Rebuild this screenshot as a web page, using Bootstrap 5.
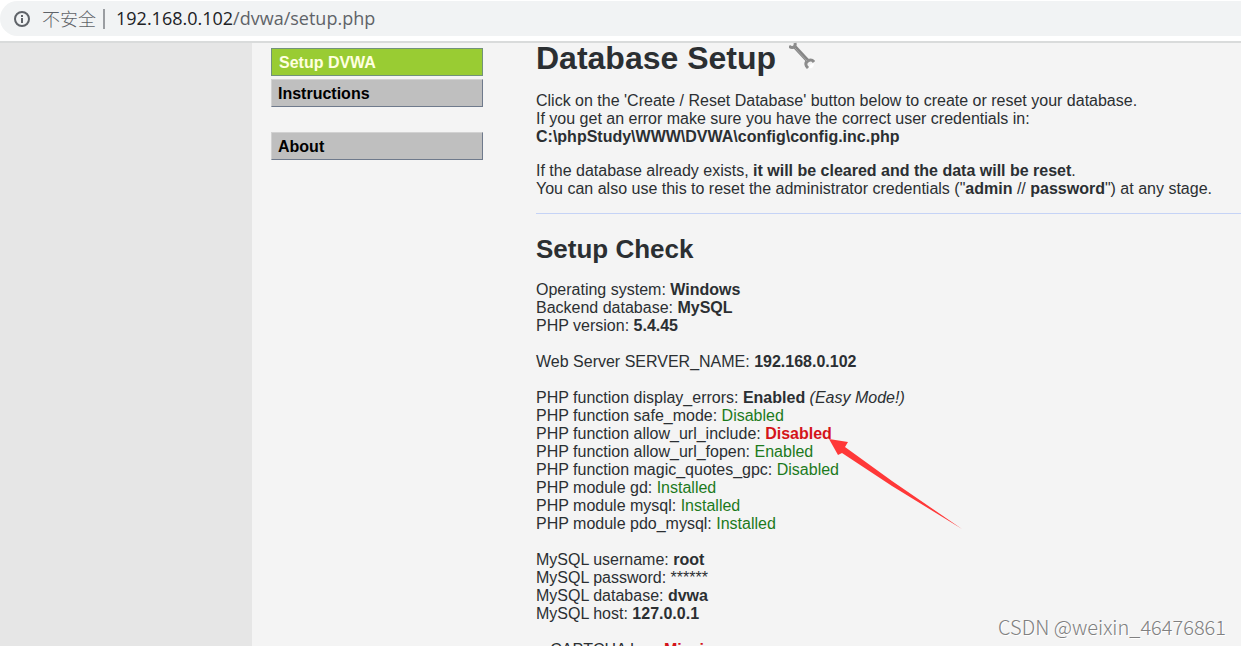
<!DOCTYPE html>
<html lang="en">
<head>
<meta charset="utf-8">
<meta name="viewport" content="width=device-width, initial-scale=1">
<title>Setup :: Damn Vulnerable Web Application</title>
<link href="https://cdn.jsdelivr.net/npm/bootstrap@5.3.0/dist/css/bootstrap.min.css" rel="stylesheet">
<style>
  body { font: 16px/18px "Liberation Sans", Arial, sans-serif; color: #2b2f32; background: #f4f4f4; }
  .omnibar { background: #fff; border-bottom: 2px solid #d9dbdb; padding: 1px 0 5px; }
  .omnibox { height: 35px; background: #f1f3f4; border-radius: 18px 0 0 18px; padding-left: 13px; color: #5f6368; font: 18px/35px "Open Sans", "Noto Sans CJK SC", sans-serif; }
  .insecure { font-family: "Noto Sans CJK SC", sans-serif; font-weight: 300; margin-left: 11px; }
  .omni-rule { width: 2px; height: 20px; background: #9a9da1; margin: 0 11px 0 7px; }
  .host { color: #202124; }
  .gutter { flex: 0 0 252px; background: #e6e6e6; }
  .side { flex: 0 0 284px; padding: 5px 53px 0 19px; }
  .menu-item { display: block; height: 28px; margin-bottom: 3px; padding: 0 6px; line-height: 28px; font-weight: bold; color: #000; text-decoration: none; background: #bfbfbf; border: 1px solid; border-color: #d2d2d2 #6f7a8c #6f7a8c #d2d2d2; }
  .menu-item.active { background: #9c3; color: #ffffe0; border-color: #72927a; padding-left: 7px; }
  .menu-gap { margin-top: 25px; }
  .page-title { font-size: 32px; line-height: 38px; font-weight: bold; margin: 0 0 15px; }
  .content-pane { margin-top: -4px; }
  .wrench { margin: 3px 0 0 13px; }
  .section-title { font-size: 26px; line-height: 30px; font-weight: bold; margin: 20px 0 17px; }
  .copy { margin-bottom: 16px; }
  .facts { margin-bottom: 18px; }
  .split { height: 0; margin: -1px 0 0; border: 0; border-top: 1px solid #c5d3f6; opacity: 1; }
  .ok { color: #1c7a1c; }
  .bad { color: #d4141a; }
  .arrow { left: 100%; top: 13px; margin-left: -4px; pointer-events: none; }
  .watermark { right: 15px; bottom: 6px; font: 300 20px/26px "Noto Sans CJK SC", sans-serif; color: #808080; text-shadow: 1px 1px 0 #fff; }
</style>
</head>
<body class="vh-100 overflow-hidden d-flex flex-column position-relative">
<header class="omnibar">
  <div class="omnibox d-flex align-items-center">
    <svg width="18" height="18" viewBox="0 0 18 18" fill="none" stroke="#5f6368" stroke-width="2" aria-hidden="true"><circle cx="9" cy="9" r="7"/><path d="M9 8v5M9 5v2"/></svg>
    <span class="insecure">不安全</span>
    <span class="omni-rule"></span>
    <span><span class="host">192.168.0.102</span>/dvwa/setup.php</span>
  </div>
</header>
<div class="d-flex flex-grow-1">
  <div class="gutter"></div>
  <nav class="side" aria-label="Main menu">
    <a class="menu-item active" href="#setup" aria-current="page">Setup DVWA</a>
    <a class="menu-item" href="#instructions">Instructions</a>
    <a class="menu-item menu-gap" href="#about">About</a>
  </nav>
  <main class="content-pane flex-grow-1">
    <h1 class="page-title d-flex">Database Setup
      <svg class="wrench" width="26" height="27" viewBox="0 0 26 27" fill="none" aria-hidden="true"><path d="M5 4L19 19" stroke="#858585" stroke-width="4"/><path d="M0 4c3 3 7 1 6-3" stroke="#8c8c8c" stroke-width="3"/><path d="M25 20c-3-4-9-1-8 3 0 1 1 2 2 3" stroke="#8c8c8c" stroke-width="3"/><path d="M20 26c3 1 5-1 5-5l-4 2z" fill="#fff"/><path d="M6 6l12 13" stroke="#a5a5a5"/></svg>
    </h1>
    <p class="copy">Click on the 'Create / Reset Database' button below to create or reset your database.<br>If you get an error make sure you have the correct user credentials in:<br><b>C:\phpStudy\WWW\DVWA\config\config.inc.php</b></p>
    <p class="copy">If the database already exists, <b>it will be cleared and the data will be reset</b>.<br>You can also use this to reset the administrator credentials ("<b>admin</b> // <b>password</b>") at any stage.</p>
    <hr class="split">
    <h2 class="section-title">Setup Check</h2>
    <p class="facts">Operating system: <b>Windows</b><br>Backend database: <b>MySQL</b><br>PHP version: <b>5.4.45</b></p>
    <p class="facts">Web Server SERVER_NAME: <b>192.168.0.102</b></p>
    <p class="facts">PHP function display_errors: <b>Enabled</b> <i>(Easy Mode!)</i><br>
      PHP function safe_mode: <span class="ok">Disabled</span><br>
      PHP function allow_url_include: <b class="bad position-relative">Disabled<svg class="arrow position-absolute" width="136" height="94" viewBox="0 0 136 94" aria-hidden="true"><path d="M1 1L20 4L17 9L64 43L134 91L64 48L14 15L10 17Z" fill="#ff3838"/></svg></b><br>
      PHP function allow_url_fopen: <span class="ok">Enabled</span><br>
      PHP function magic_quotes_gpc: <span class="ok">Disabled</span><br>
      PHP module gd: <span class="ok">Installed</span><br>
      PHP module mysql: <span class="ok">Installed</span><br>
      PHP module pdo_mysql: <span class="ok">Installed</span></p>
    <p class="facts">MySQL username: <b>root</b><br>MySQL password: ******<br>MySQL database: <b>dvwa</b><br>MySQL host: <b>127.0.0.1</b></p>
    <p class="facts">reCAPTCHA key: <b class="bad">Missing</b></p>
  </main>
</div>
<div class="watermark position-absolute">CSDN @weixin_46476861</div>
<script src="https://cdn.jsdelivr.net/npm/bootstrap@5.3.0/dist/js/bootstrap.bundle.min.js"></script>
</body>
</html>
